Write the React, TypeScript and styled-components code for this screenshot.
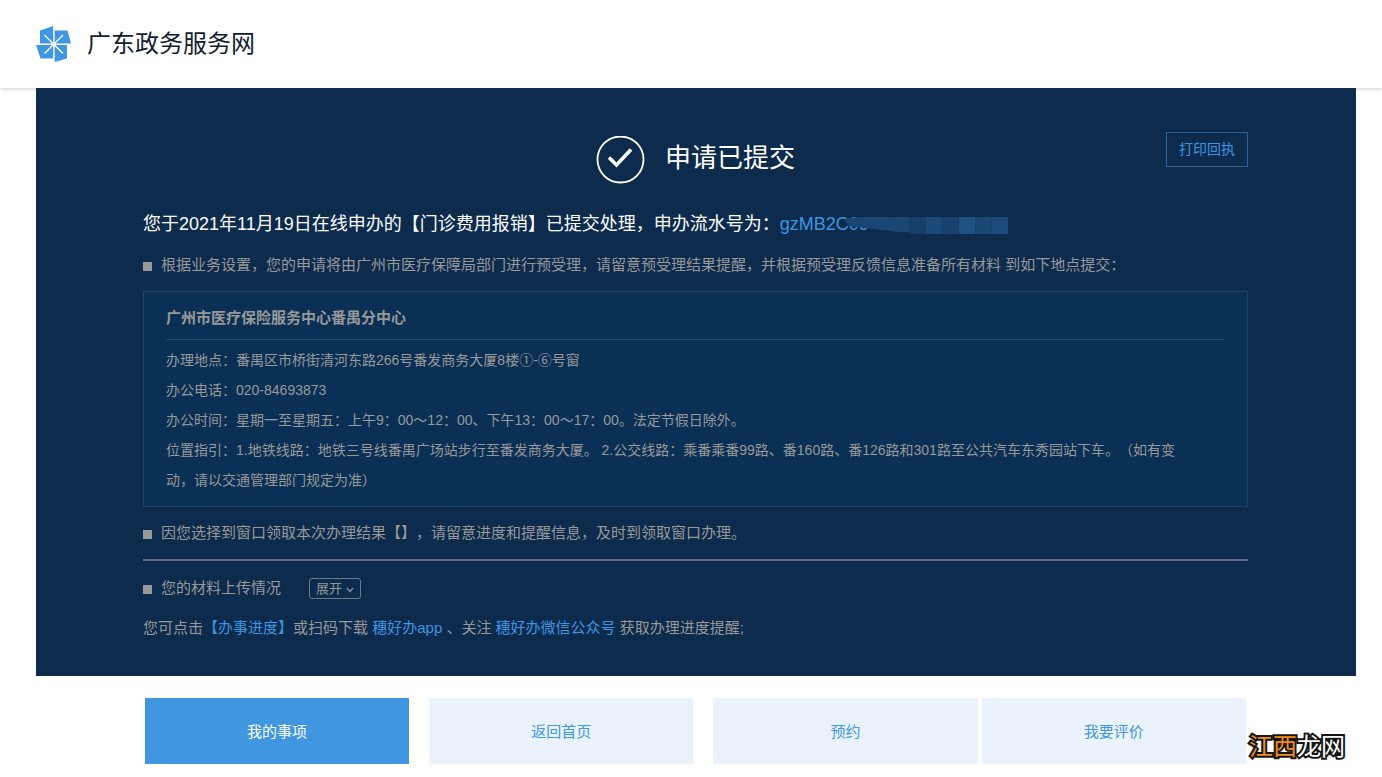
import React from 'react';
import styled, { createGlobalStyle, css } from 'styled-components';

const GlobalStyle = createGlobalStyle`
  *, *::before, *::after { box-sizing: border-box; }
  body {
    margin: 0;
    background: #fff;
    font-family: "Liberation Sans", "Noto Sans CJK SC", sans-serif;
    text-spacing-trim: space-all;
  }
  h1, h2, h3, p, ul { margin: 0; padding: 0; font-weight: 400; }
  button { font-family: inherit; cursor: pointer; }
  a { color: #4096e0; text-decoration: none; }
`;

const Page = styled.div`
  position: relative;
  padding-bottom: 13px;
`;

const Header = styled.header`
  position: relative;
  display: flex;
  align-items: center;
  gap: 16px;
  height: 88px;
  padding: 0 36px;
  background: #fff;
  box-shadow: 0 1px 4px rgba(0, 0, 0, 0.2);
`;

const SiteName = styled.h1`
  font-size: 24px;
  line-height: 32px;
  color: #10202f;
`;

const Panel = styled.main`
  position: relative;
  margin: 0 26px 0 36px;
  padding: 44px 108px 33px 107px;
  background: #0c2b4d;
  color: #999;
`;

const Hero = styled.div`
  display: grid;
  grid-template-columns: 1fr auto 1fr;
  align-items: start;
  padding-bottom: 25px;
`;

const Status = styled.div`
  grid-column: 2;
  display: flex;
  align-items: center;
  gap: 20px;
  margin-top: 4px;
`;

const StatusTitle = styled.h2`
  font-size: 26px;
  line-height: 44px;
  padding-bottom: 4px;
  color: #fff;
`;

const PrintButton = styled.button`
  justify-self: end;
  height: 35px;
  padding: 0 12px 4px;
  border: 1px solid #28649b;
  background: transparent;
  color: #4096e0;
  font-size: 14px;
`;

const Headline = styled.p`
  display: flex;
  align-items: center;
  font-size: 18px;
  line-height: 30px;
  color: #fff;
`;

const Serial = styled.a`
  display: flex;
  align-items: center;
`;

const Mosaic = styled.svg`
  margin: 2px 0 0 -24px;
`;

const Bullet = styled.div<{ $top?: number }>`
  display: flex;
  align-items: center;
  gap: 9px;
  margin-top: ${(p) => p.$top ?? 11}px;
  font-size: 15px;
  line-height: 30px;

  &::before {
    content: "";
    flex: none;
    width: 9px;
    height: 9px;
    margin-top: 2px;
    background: #999;
  }
`;

const AddressBox = styled.section`
  margin-top: 11px;
  padding: 11px 22px;
  border: 1px solid #1c4266;
  background: #0a3056;
`;

const AddressTitle = styled.h3`
  padding-bottom: 6px;
  margin-bottom: 5px;
  border-bottom: 1px solid #28496b;
  font-size: 15px;
  line-height: 30px;
  font-weight: 700;
`;

const AddressLine = styled.p`
  padding-right: 40px;
  font-size: 14px;
  line-height: 30px;
`;

const Divider = styled.hr`
  height: 2px;
  margin: 11px 0 0;
  border: 0;
  background: #5b6e85;
`;

const ExpandButton = styled.button`
  display: flex;
  align-items: center;
  gap: 4px;
  height: 21px;
  margin-left: 19px;
  padding: 0 6px;
  border: 1px solid #6b7b8c;
  border-radius: 3px;
  background: transparent;
  color: #999;
  font-size: 13px;
  line-height: 19px;
`;

const Chevron = styled.svg`
  margin-top: 4px;
`;

const Hint = styled.p`
  margin-top: 10px;
  font-size: 15px;
  line-height: 30px;
`;

const Actions = styled.nav`
  display: grid;
  grid-template-columns: 264fr 264fr 532fr;
  gap: 20px;
  margin: 22px 136px 0 145px;
`;

const ActionPair = styled.div`
  display: grid;
  grid-template-columns: 1fr 1fr;
  gap: 4px;
`;

const ActionButton = styled.button<{ $primary?: boolean }>`
  height: 66px;
  padding: 0 0 2px;
  border: 0;
  background: #eaf3fb;
  color: #4096e0;
  font-size: 15px;
  ${(p) => p.$primary && css`
    background: #4096e0;
    color: #fff;
  `}
`;

const Watermark = styled.div`
  position: absolute;
  right: 37px;
  bottom: 14px;
  font-size: 24px;
  line-height: 32px;
  color: #fff;
  -webkit-text-stroke: 4px #151515;
  paint-order: stroke fill;

  span { color: #f08c1a; }
`;

const Logo = () => (
  <svg width="35" height="36" viewBox="0 0 35 36" aria-hidden="true">
    <path fill="#4096e0" d="M4 4.5 17.2 0V17.5H4ZM18.6 4.5H31.5L35 17.5H18.6ZM0 19H17.2V32.5H4.5ZM18.6 19H31V32.5L18.6 36Z" />
    <path stroke="#fff" strokeWidth="1.3" d="M8.5 9 27 27.5M27 9 8.5 27.5" />
    <circle cx="17.9" cy="18.2" r="2.2" fill="#fff" />
  </svg>
);

const CheckCircle = () => (
  <svg width="49" height="48" viewBox="0 0 49 48" fill="none" stroke="#fff" aria-hidden="true">
    <circle cx="24.5" cy="23.5" r="23" strokeWidth="1.8" />
    <path d="M13 21.5 20.5 29 35 13.5" strokeWidth="3.6" />
  </svg>
);

const tiles = ['#1a4673', '#163f68', '#1b4a79', '#18426d', '#1d5281', '#1a4874', '#1c4b7b'];

const lines = [
  '办理地点：番禺区市桥街清河东路266号番发商务大厦8楼①-⑥号窗',
  '办公电话：020-84693873',
  '办公时间：星期一至星期五：上午9：00～12：00、下午13：00～17：00。法定节假日除外。',
  '位置指引：1.地铁线路：地铁三号线番禺广场站步行至番发商务大厦。 2.公交线路：乘番乘番99路、番160路、番126路和301路至公共汽车东秀园站下车。（如有变动，请以交通管理部门规定为准）',
];

export default function App() {
  return (
    <Page>
      <GlobalStyle />
      <Header>
        <Logo />
        <SiteName>广东政务服务网</SiteName>
      </Header>
      <Panel>
        <Hero>
          <Status>
            <CheckCircle />
            <StatusTitle>申请已提交</StatusTitle>
          </Status>
          <PrintButton type="button">打印回执</PrintButton>
        </Hero>
        <Headline>
          您于2021年11月19日在线申办的【门诊费用报销】已提交处理，申办流水号为：
          <Serial href="#serial">
            gzMB2C0c
            <Mosaic width="164" height="18" viewBox="0 0 180 18" preserveAspectRatio="none" aria-hidden="true">
              <path fill="#1a4673" d="M0 3 18 1H80V17L40 14 22 12 4 10Z" />
              {tiles.map((fill, i) => (
                <rect key={i} x={54 + i * 18} y="1" width="18" height={i === 0 ? 15 : 17} fill={fill} />
              ))}
            </Mosaic>
          </Serial>
        </Headline>
        <Bullet>
          根据业务设置，您的申请将由广州市医疗保障局部门进行预受理，请留意预受理结果提醒，并根据预受理反馈信息准备所有材料 到如下地点提交：
        </Bullet>
        <AddressBox>
          <AddressTitle>广州市医疗保险服务中心番禺分中心</AddressTitle>
          {lines.map((line) => (
            <AddressLine key={line}>{line}</AddressLine>
          ))}
        </AddressBox>
        <Bullet>因您选择到窗口领取本次办理结果【】，请留意进度和提醒信息，及时到领取窗口办理。</Bullet>
        <Divider />
        <Bullet $top={12}>
          您的材料上传情况
          <ExpandButton type="button">
            展开
            <Chevron width="8" height="6" viewBox="0 0 8 6" fill="none" stroke="#7d8894" strokeWidth="1.6" aria-hidden="true">
              <path d="M1 1 4 4.5 7 1" />
            </Chevron>
          </ExpandButton>
        </Bullet>
        <Hint>
          您可点击<a href="#progress">【办事进度】</a>或扫码下载 <a href="#app">穗好办app</a> 、关注{' '}
          <a href="#wechat">穗好办微信公众号</a> 获取办理进度提醒;
        </Hint>
      </Panel>
      <Actions>
        <ActionButton type="button" $primary>我的事项</ActionButton>
        <ActionButton type="button">返回首页</ActionButton>
        <ActionPair>
          <ActionButton type="button">预约</ActionButton>
          <ActionButton type="button">我要评价</ActionButton>
        </ActionPair>
      </Actions>
      <Watermark><span>江西</span>龙网</Watermark>
    </Page>
  );
}
